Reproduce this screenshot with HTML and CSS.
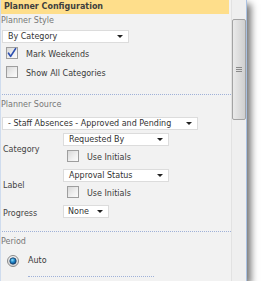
FILE: index.html
```html
<!DOCTYPE html>
<html>
<head>
<meta charset="utf-8">
<link rel="stylesheet" href="styles.css">
</head>
<body>
<div class="panel">
  <div class="content">
    <div class="header">Planner Configuration</div>

    <div class="sec-title">Planner Style</div>
    <div class="select w-style"><span class="sel-text">By Category</span><span class="arrow"></span></div>
    <div class="check-row first">
      <span class="cb"><svg width="12" height="12" viewBox="0 0 12 12"><path d="M2.5 6.2 L4.6 9.4 L9.6 1.6" fill="none" stroke="#2c4fb0" stroke-width="1.7" stroke-linecap="round" stroke-linejoin="round"/></svg></span>
      <span class="cb-text">Mark Weekends</span>
    </div>
    <div class="check-row second">
      <span class="cb"></span>
      <span class="cb-text">Show All Categories</span>
    </div>
    <div class="dots d1"></div>

    <div class="sec-title">Planner Source</div>
    <div class="select w-source"><span class="sel-text">- Staff Absences - Approved and Pending</span><span class="arrow"></span></div>

    <div class="fields">
      <div class="lbl">Category</div>
      <div class="ctl">
        <div class="select w-field"><span class="sel-text">Requested By</span><span class="arrow"></span></div>
        <div class="check-row inner"><span class="cb"></span><span class="cb-text">Use Initials</span></div>
      </div>
      <div class="lbl">Label</div>
      <div class="ctl">
        <div class="select w-field"><span class="sel-text">Approval Status</span><span class="arrow"></span></div>
        <div class="check-row inner"><span class="cb"></span><span class="cb-text">Use Initials</span></div>
      </div>
      <div class="lbl">Progress</div>
      <div class="ctl">
        <div class="select w-none"><span class="sel-text">None</span><span class="arrow"></span></div>
      </div>
    </div>
    <div class="dots d2"></div>

    <div class="sec-title">Period</div>
    <div class="radio-row">
      <span class="radio"><svg width="12" height="12" viewBox="0 0 12 12">
        <defs>
          <radialGradient id="rg" cx="0.4" cy="0.35" r="0.7">
            <stop offset="0" stop-color="#8fe0ff"/>
            <stop offset="0.5" stop-color="#1d86c8"/>
            <stop offset="1" stop-color="#0b3e7a"/>
          </radialGradient>
          <linearGradient id="ring" x1="0" y1="0" x2="0" y2="1">
            <stop offset="0" stop-color="#f4f4f4"/>
            <stop offset="1" stop-color="#d6d6d6"/>
          </linearGradient>
        </defs>
        <circle cx="6" cy="6" r="5.5" fill="url(#ring)" stroke="#8a8a8a" stroke-width="1"/>
        <circle cx="6" cy="6" r="3.2" fill="url(#rg)" stroke="#1c3f66" stroke-width="0.8"/>
      </svg></span>
      <span class="cb-text">Auto</span>
    </div>
    <div class="dots d3"></div>
  </div>
  <div class="scrollbar">
    <div class="thumb"><span class="grip"></span></div>
  </div>
</div>
</body>
</html>
```

FILE: styles.css
```css
html, body {
  margin: 0;
  padding: 0;
  background: #ffffff;
}

body {
  font-family: "DejaVu Sans", Verdana, sans-serif;
  font-size: 8px;
  color: #3a3a3a;
}

.panel {
  width: 247px;
  height: 281px;
  box-sizing: border-box;
  display: flex;
  background: #f2f2f2;
  border-left: 1px solid #cfdcee;
  border-right: 1px solid #a9c1e2;
  box-shadow: 4px 4px 7px rgba(0, 0, 0, 0.55);
  overflow: hidden;
}

.content {
  flex: 1;
  display: flex;
  flex-direction: column;
  align-items: flex-start;
  min-width: 0;
}

.header {
  align-self: stretch;
  height: 14px;
  line-height: 14px;
  margin-right: 2px;
  margin-left: -1px;
  padding-left: 4px;
  background: #fede8b;
  font-weight: bold;
  color: #3e3e3e;
}

.sec-title {
  height: 11px;
  line-height: 11px;
  color: #777777;
  margin-top: 1px;
}

.select {
  position: relative;
  box-sizing: border-box;
  height: 13px;
  line-height: 11px;
  background: #ffffff;
  border: 1px solid #dcdcdc;
  padding-left: 5px;
  color: #333333;
  white-space: nowrap;
}

.arrow {
  position: absolute;
  right: 5px;
  top: 4px;
  width: 0;
  height: 0;
  border-left: 3px solid transparent;
  border-right: 3px solid transparent;
  border-top: 3px solid #222222;
}

.w-style {
  width: 127px;
  margin-top: 4px;
  margin-left: 1px;
}

.w-source {
  width: 196px;
  margin-top: 7px;
  margin-left: 1px;
}

.w-field {
  width: 106px;
}

.w-none {
  width: 46px;
  padding-left: 4px;
}

.check-row {
  display: flex;
  align-items: flex-start;
  height: 12px;
}

.check-row.first {
  margin-top: 4px;
  margin-left: 5px;
}

.check-row.second {
  margin-top: 7px;
  margin-left: 5px;
}

.cb {
  box-sizing: border-box;
  width: 12px;
  height: 12px;
  border: 1px solid #9e9e9e;
  background: linear-gradient(135deg, #d8d8d8 0%, #f0f0f0 60%, #fbfbfb 100%);
  display: flex;
  align-items: center;
  justify-content: center;
  flex: none;
}

.cb svg {
  display: block;
  margin: -1px;
}

.cb-text {
  line-height: 12px;
  padding-top: 2px;
  margin-left: 8px;
  color: #3a3a3a;
  white-space: nowrap;
}

.dots {
  align-self: stretch;
  height: 0;
  border-top: 1px dotted #9fb1d8;
  margin-left: 1px;
}

.d1 {
  margin-top: 16px;
  margin-bottom: 3px;
}

.d2 {
  margin-top: 13px;
  margin-bottom: 3px;
}

.d3 {
  align-self: flex-start;
  width: 126px;
  margin-left: 27px;
  margin-top: 9px;
}

.fields {
  display: grid;
  grid-template-columns: 62px auto;
  align-items: center;
  margin-top: 3px;
  row-gap: 7px;
}

.lbl {
  padding-left: 2px;
  color: #444444;
  padding-top: 3px;
}

.ctl {
  display: flex;
  flex-direction: column;
  align-items: flex-start;
}

.check-row.inner {
  margin-top: 4px;
  margin-left: 4px;
}

.radio-row {
  display: flex;
  align-items: center;
  margin-top: 8px;
  margin-left: 6px;
}

.radio {
  width: 12px;
  height: 12px;
  flex: none;
}

.radio svg {
  display: block;
}

.radio-row .cb-text {
  padding-top: 0;
  margin-left: 9px;
}

.scrollbar {
  width: 15px;
  flex: none;
  background: #efefef;
  border-left: 1px solid #e2e2e2;
  box-sizing: border-box;
  padding-top: 19px;
}

.thumb {
  box-sizing: border-box;
  height: 101px;
  width: 14px;
  border: 1px solid #a3a3a3;
  border-radius: 2px;
  background: linear-gradient(to right, #eaeaea 0%, #dedede 45%, #cfcfcf 100%);
  display: flex;
  align-items: center;
  justify-content: center;
}

.grip {
  width: 6px;
  height: 5px;
  background: repeating-linear-gradient(to bottom, #8a8a8a 0, #8a8a8a 1px, transparent 1px, transparent 2px);
}
```
